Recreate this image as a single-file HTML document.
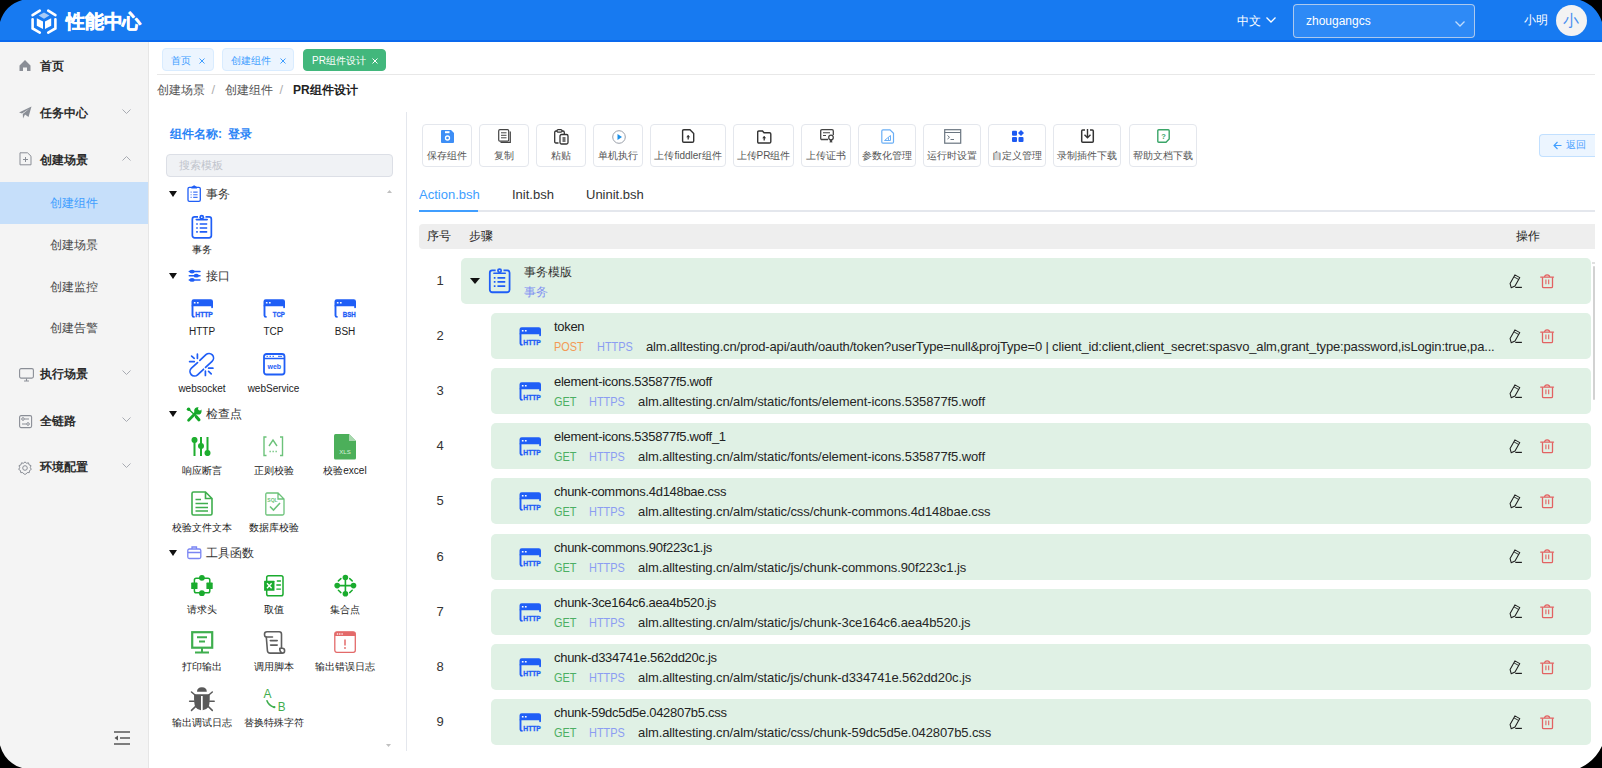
<!DOCTYPE html>
<html><head><meta charset="utf-8"><title>PR组件设计</title>
<style>
*{box-sizing:border-box;margin:0;padding:0}
html,body{width:1602px;height:768px;overflow:hidden;background:#000}
body{font-family:"Liberation Sans",sans-serif;color:#303133}
#app{position:absolute;left:0;top:0;width:1602px;height:768px;background:#fff;overflow:hidden}
.a{position:absolute;white-space:nowrap}
svg{position:absolute;overflow:visible}
#hdr{position:absolute;left:0;top:0;width:1602px;height:42px;background:#177af1;border-bottom:2px solid #0a69ee}
#side{position:absolute;left:0;top:42px;width:149px;height:726px;background:#f4f4f4;border-right:1px solid #e6e6e6}
.mi{font-size:12px;font-weight:bold;color:#2b2b2b;line-height:14px}
.si{font-size:12px;color:#4a4a4a;line-height:14px}
.tag{position:absolute;height:23px;border:1px solid #d9ecff;background:#ecf5ff;border-radius:4px;color:#409eff;font-size:10px;line-height:23px;padding-left:8px}
.tag .x{position:absolute;font-size:11px}
.bc{font-size:12px;color:#555;line-height:14px}
.pl{font-size:10px;color:#222;line-height:13px;text-align:center;width:80px}
.ph{font-size:12px;color:#333;line-height:14px}
.tri{position:absolute;width:0;height:0;border-left:4.5px solid transparent;border-right:4.5px solid transparent;border-top:6px solid #111}
.btn{position:absolute;top:124px;height:43px;border:1px solid #e4e7ed;border-radius:4px;background:#fff}
.btn .t{position:absolute;left:0;right:0;top:25px;text-align:center;font-size:10px;color:#555;line-height:12px}
.row{position:absolute;height:46px;background:#e0f1e5;border-radius:5px;left:491px;width:1100px}
.num{position:absolute;left:420px;width:40px;text-align:center;font-size:13px;color:#333;line-height:16px}
.t1{position:absolute;left:554px;font-size:13px;color:#222;line-height:16px;letter-spacing:-0.3px}
.t2{position:absolute;font-size:13px;line-height:16px}
.sx{transform:scaleX(.84);transform-origin:0 0}
.get{color:#4caf63}.post{color:#f39a55}.https{color:#8c9df2}
.url{color:#262626}
</style></head>
<body><div id="app">
<div id="hdr">
<svg style="left:28px;top:6px" width="32" height="30" viewBox="0 0 32 30"><g fill="none" stroke="#fff" stroke-width="2.6" stroke-linecap="round"><path d="M4.6 9.2 L11.8 4.6"/><path d="M20.2 4.6 L27.4 9.2"/><path d="M4.6 13.2 V22.4 L11.8 26.6"/><path d="M27.4 13.2 V22.4 L20.2 26.6"/></g><path d="M10.6 9.6 L16 6.4 L21.4 9.6 L16 12.8Z" fill="#a6cbf7"/><path d="M8.8 12.2 L15 15.4 V23 L8.8 19.8Z" fill="#fff"/><path d="M23.2 12.2 L17 15.4 V23 L23.2 19.8Z" fill="#fff"/></svg>
<div class="a " style="left:66px;top:10px;font-size:19px;font-weight:bold;color:#fff;line-height:24px;letter-spacing:-0.2px;-webkit-text-stroke:0.5px #fff">性能中心</div>
<div class="a " style="left:1237px;top:14px;font-size:12px;color:#fff;line-height:14px">中文</div>
<svg style="left:1266px;top:17px" width="10" height="6" viewBox="0 0 10 6"><path d="M0.5 0.5 L5.0 5 L9.5 0.5" fill="none" stroke="#fff" stroke-width="1.3"/></svg>
<div class="a" style="left:1293px;top:4px;width:182px;height:34px;border:1px solid rgba(215,222,235,.75);border-radius:4px;background:#2e8af6"></div>
<div class="a " style="left:1306px;top:13px;font-size:12px;color:#fff;line-height:16px">zhougangcs</div>
<svg style="left:1455px;top:21px" width="10" height="6" viewBox="0 0 10 6"><path d="M0.5 0.5 L5.0 5 L9.5 0.5" fill="none" stroke="rgba(255,255,255,.7)" stroke-width="1.3"/></svg>
<div class="a " style="left:1524px;top:13px;font-size:12px;color:#fff;line-height:14px">小明</div>
<div class="a" style="left:1556px;top:5px;width:31px;height:31px;border-radius:50%;background:#f3f3f3"></div>
<div class="a " style="left:1563px;top:12px;font-size:16px;color:#4a90f0;line-height:18px">小</div>
</div>
<div id="side"></div>
<svg style="left:19px;top:59px" width="13" height="13" viewBox="0 0 13 13"><path d="M0.5 6.5 L6 1 L11.5 6.5 V12 H8 V8.5 H4 V12 H0.5Z" fill="#8a8e96"/></svg>
<div class="a mi" style="left:40px;top:59px;">首页</div>
<svg style="left:19px;top:106px" width="13" height="13" viewBox="0 0 13 13"><path d="M0 6.5 L12.5 0.5 L9.5 11 L6 8.5 L4 12.5 L3.8 8 L10.5 2.5 L3 7.5Z" fill="#8a8e96"/></svg>
<div class="a mi" style="left:40px;top:106px;">任务中心</div>
<svg style="left:122px;top:109px" width="9" height="5.5" viewBox="0 0 9 5.5"><path d="M0.5 0.5 L4.5 4.5 L8.5 0.5" fill="none" stroke="#a8abb2" stroke-width="1"/></svg>
<svg style="left:19px;top:152px" width="13" height="14" viewBox="0 0 13 14"><path d="M1 0.8 H8.5 L12 4.2 V12.8 H1Z" fill="none" stroke="#8a8e96" stroke-width="1"/><path d="M4 7.5 H9 M6.5 5 V10" stroke="#8a8e96" stroke-width="1"/></svg>
<div class="a mi" style="left:40px;top:153px;">创建场景</div>
<svg style="left:122px;top:156px" width="9" height="5.5" viewBox="0 0 9 5.5"><path d="M0.5 4.5 L4.5 0.5 L8.5 4.5" fill="none" stroke="#a8abb2" stroke-width="1"/></svg>
<svg style="left:19px;top:368px" width="15" height="14" viewBox="0 0 15 14"><rect x="0.6" y="0.6" width="13.8" height="9.5" rx="1.5" fill="none" stroke="#8a8e96" stroke-width="1.1"/><path d="M5 13 H10 M7.5 10.5 V13" stroke="#8a8e96" stroke-width="1.1"/></svg>
<div class="a mi" style="left:40px;top:367px;">执行场景</div>
<svg style="left:122px;top:370px" width="9" height="5.5" viewBox="0 0 9 5.5"><path d="M0.5 0.5 L4.5 4.5 L8.5 0.5" fill="none" stroke="#a8abb2" stroke-width="1"/></svg>
<svg style="left:19px;top:415px" width="13" height="13" viewBox="0 0 13 13"><rect x="0.6" y="0.6" width="12" height="12" rx="1.5" fill="none" stroke="#8a8e96" stroke-width="1.1"/><circle cx="4" cy="4" r="1.3" fill="none" stroke="#8a8e96"/><circle cx="9" cy="9" r="1.3" fill="none" stroke="#8a8e96"/><path d="M5.5 4 H10 M3 9 H7.5" stroke="#8a8e96"/></svg>
<div class="a mi" style="left:40px;top:414px;">全链路</div>
<svg style="left:122px;top:417px" width="9" height="5.5" viewBox="0 0 9 5.5"><path d="M0.5 0.5 L4.5 4.5 L8.5 0.5" fill="none" stroke="#a8abb2" stroke-width="1"/></svg>
<svg style="left:18px;top:460.5px" width="14" height="14" viewBox="0 0 14 14"><path d="M7 0.8 L8.4 2.3 L10.5 1.8 L11 3.8 L13 4.6 L12.3 6.6 L13.3 8.4 L11.5 9.6 L11.3 11.6 L9.2 11.6 L7.8 13.2 L6.2 13.2 L4.8 11.6 L2.7 11.6 L2.5 9.6 L0.7 8.4 L1.7 6.6 L1 4.6 L3 3.8 L3.5 1.8 L5.6 2.3Z" fill="none" stroke="#8a8e96" stroke-width="1"/><circle cx="7" cy="7" r="2.3" fill="none" stroke="#8a8e96" stroke-width="1"/></svg>
<div class="a mi" style="left:40px;top:460px;">环境配置</div>
<svg style="left:122px;top:463px" width="9" height="5.5" viewBox="0 0 9 5.5"><path d="M0.5 0.5 L4.5 4.5 L8.5 0.5" fill="none" stroke="#a8abb2" stroke-width="1"/></svg>
<div class="a" style="left:0;top:182px;width:148px;height:42px;background:#c6dffa"></div>
<div class="a si" style="left:50px;top:196px;color:#409eff">创建组件</div>
<div class="a si" style="left:50px;top:238px;">创建场景</div>
<div class="a si" style="left:50px;top:280px;">创建监控</div>
<div class="a si" style="left:50px;top:321px;">创建告警</div>
<svg style="left:114px;top:731px" width="16" height="14" viewBox="0 0 16 14"><path d="M0 1 H16 M6 7 H16 M0 13 H16" stroke="#555" stroke-width="1.6"/><path d="M4 4.5 L0.5 7 L4 9.5Z" fill="#555"/></svg>
<div class="tag" style="left:162px;top:48px;width:52px">首页<svg style="left:36px;top:9px" width="6" height="6" viewBox="0 0 6 6"><path d="M0.5 0.5 L5.5 5.5 M5.5 0.5 L0.5 5.5" stroke="#409eff" stroke-width="1"/></svg></div>
<div class="tag" style="left:222px;top:48px;width:72px">创建组件<svg style="left:57px;top:9px" width="6" height="6" viewBox="0 0 6 6"><path d="M0.5 0.5 L5.5 5.5 M5.5 0.5 L0.5 5.5" stroke="#409eff" stroke-width="1"/></svg></div>
<div class="tag" style="left:303px;top:49px;width:83px;height:22px;background:#42b77c;border-color:#42b77c;color:#fff;line-height:22px">PR组件设计<svg style="left:68px;top:7.5px" width="6" height="6" viewBox="0 0 6 6"><path d="M0.5 0.5 L5.5 5.5 M5.5 0.5 L0.5 5.5" stroke="#fff" stroke-width="1"/></svg></div>
<div class="a" style="left:157px;top:74px;width:1438px;height:1px;background:#e8e8e8"></div>
<div class="a bc" style="left:157px;top:83px;">创建场景</div>
<div class="a bc" style="left:211.5px;top:82px;color:#b0b0b0;font-size:13px;line-height:16px">/</div>
<div class="a bc" style="left:225px;top:83px;">创建组件</div>
<div class="a bc" style="left:279.5px;top:82px;color:#b0b0b0;font-size:13px;line-height:16px">/</div>
<div class="a bc" style="left:293px;top:83px;font-weight:bold;color:#222">PR组件设计</div>
<div class="a" style="left:406px;top:112px;width:1px;height:639px;background:#e4e7ed"></div>
<div class="a " style="left:170px;top:126.5px;font-size:12px;color:#2b84f6;line-height:14px;font-weight:bold;word-spacing:0">组件名称:<span style="margin-left:6px">登录</span></div>
<div class="a" style="left:166px;top:154px;width:227px;height:23px;background:#f0f2f5;border:1px solid #dcdfe6;border-radius:4px"></div>
<div class="a " style="left:179px;top:159px;font-size:11px;color:#c0c4cc;line-height:13px">搜索模板</div>
<svg style="left:386.5px;top:190px" width="5" height="3" viewBox="0 0 5 3"><path d="M0 3 L2.5 0 L5 3Z" fill="#c0c0c0"/></svg>
<svg style="left:385.5px;top:744px" width="5" height="3" viewBox="0 0 5 3"><path d="M0 0 L2.5 3 L5 0Z" fill="#c0c0c0"/></svg>
<div class="tri" style="left:169px;top:191px"></div>
<svg style="left:187px;top:186.2px" width="14" height="16" viewBox="0 0 14 16"><rect x="1" y="1.45" width="12.3" height="13.9" rx="1.4" fill="none" stroke="#1f5ef6" stroke-width="1.3"/><path d="M4.3 2.4 V1.1 L7.15 -0.8 L10 1.1 V2.4Z" fill="#1f5ef6"/><path d="M3.6 6.1 H4.6 M6.2 6.1 H10.6 M3.6 8.8 H4.6 M6.2 8.8 H10.6 M3.6 11.4 H4.6 M6.2 11.4 H10.6" stroke="#1f5ef6" stroke-width="1.1" opacity=".85"/></svg>
<div class="a ph" style="left:206px;top:187px;">事务</div>
<div class="tri" style="left:169px;top:273px"></div>
<svg style="left:188px;top:270px" width="13" height="12" viewBox="0 0 13 12"><path d="M1.3 1.6 H12 M1.3 5.7 H12 M1.3 9.9 H12" stroke="#1f5ef6" stroke-width="1.5" stroke-linecap="round"/><ellipse cx="4.1" cy="1.6" rx="2.6" ry="1.9" fill="#1f5ef6"/><ellipse cx="8.3" cy="5.7" rx="2.6" ry="1.9" fill="#1f5ef6"/><ellipse cx="4.1" cy="9.9" rx="2.6" ry="1.9" fill="#1f5ef6"/></svg>
<div class="a ph" style="left:206px;top:269px;">接口</div>
<div class="tri" style="left:169px;top:411px"></div>
<svg style="left:183px;top:402px" width="24" height="24" viewBox="0 0 24 24"><g stroke="#15a82a" stroke-linecap="round"><circle cx="5.6" cy="7.2" r="1.8" fill="#15a82a" stroke="none"/><path d="M5.6 7.2 L12.2 13.2" stroke-width="1.4"/><path d="M13.3 14.8 L15.9 17.8" stroke-width="3.2"/><path d="M13.2 10.6 L5.6 18.2" stroke-width="2.8"/></g><circle cx="14.9" cy="8.9" r="3.7" fill="#15a82a"/><circle cx="16.9" cy="6.6" r="1.9" fill="#fff"/><path d="M16.4 5.2 L19.5 2.5 L21 5 L18.3 7.6Z" fill="#fff"/></svg>
<div class="a ph" style="left:206px;top:407px;">检查点</div>
<div class="tri" style="left:169px;top:550px"></div>
<svg style="left:187px;top:546px" width="15" height="13" viewBox="0 0 15 13"><rect x="0.8" y="3" width="13" height="9.5" rx="1.5" fill="none" stroke="#7a85f3" stroke-width="1.3"/><path d="M5 3 V1 H9.5 V3 M0.8 6.5 H13.8" fill="none" stroke="#7a85f3" stroke-width="1.3"/></svg>
<div class="a ph" style="left:206px;top:546px;">工具函数</div>
<svg style="left:191px;top:214px" width="22" height="26" viewBox="0 0 22 26"><rect x="1.35" y="2.85" width="19" height="21.05" rx="2.3" fill="none" stroke="#1f5ef6" stroke-width="1.7"/><rect x="7" y="1" width="7.5" height="3.5" fill="#fff"/><circle cx="10.75" cy="3.2" r="2.4" fill="#1f5ef6"/><circle cx="10.75" cy="3.2" r=".8" fill="#fff"/><path d="M5.3 5.6 H16.2" stroke="#1f5ef6" stroke-width="1.6" stroke-linecap="round"/><path d="M5.2 10 H6.8 M8.7 10 H16.2 M5.2 14 H6.8 M8.7 14 H16.2 M5.2 17.9 H6.8 M8.7 17.9 H16.2" stroke="#1f5ef6" stroke-width="1.7"/></svg>
<div class="a pl" style="left:162px;top:243.0px;">事务</div>
<svg style="left:191px;top:299px" width="23" height="19" viewBox="0 0 23 19"><path d="M0.5 2.5 Q0.5 0.3 2.7 0.3 H19.8 Q22 0.3 22 2.5 V8.2 Q22 9.2 21 9.2 Q20.2 9.2 20.2 8.2 V7.2 H0.5Z" fill="#1f5ef6"/><path d="M1.5 6.5 V16.6 Q1.5 17.9 3 17.9 H3.6" fill="none" stroke="#1f5ef6" stroke-width="1.9"/><rect x="2.8" y="3" width="1.8" height="1.6" rx=".5" fill="#fff"/><rect x="5.9" y="3" width="1.8" height="1.6" rx=".5" fill="#fff"/><text x="21.8" y="18.2" font-family="Liberation Sans" font-weight="bold" font-size="7" fill="#1f5ef6" text-anchor="end" textLength="17.5" lengthAdjust="spacingAndGlyphs" stroke="#1f5ef6" stroke-width=".35">HTTP</text></svg>
<div class="a pl" style="left:162px;top:324.5px;">HTTP</div>
<svg style="left:262.5px;top:299px" width="23" height="19" viewBox="0 0 23 19"><path d="M0.5 2.5 Q0.5 0.3 2.7 0.3 H19.8 Q22 0.3 22 2.5 V8.2 Q22 9.2 21 9.2 Q20.2 9.2 20.2 8.2 V7.2 H0.5Z" fill="#1f5ef6"/><path d="M1.5 6.5 V16.6 Q1.5 17.9 3 17.9 H3.6" fill="none" stroke="#1f5ef6" stroke-width="1.9"/><rect x="2.8" y="3" width="1.8" height="1.6" rx=".5" fill="#fff"/><rect x="5.9" y="3" width="1.8" height="1.6" rx=".5" fill="#fff"/><text x="21.8" y="18.2" font-family="Liberation Sans" font-weight="bold" font-size="7.5" fill="#1f5ef6" text-anchor="end" textLength="12" lengthAdjust="spacingAndGlyphs" stroke="#1f5ef6" stroke-width=".35">TCP</text></svg>
<div class="a pl" style="left:233.5px;top:324.5px;">TCP</div>
<svg style="left:334px;top:299px" width="23" height="19" viewBox="0 0 23 19"><path d="M0.5 2.5 Q0.5 0.3 2.7 0.3 H19.8 Q22 0.3 22 2.5 V8.2 Q22 9.2 21 9.2 Q20.2 9.2 20.2 8.2 V7.2 H0.5Z" fill="#1f5ef6"/><path d="M1.5 6.5 V16.6 Q1.5 17.9 3 17.9 H3.6" fill="none" stroke="#1f5ef6" stroke-width="1.9"/><rect x="2.8" y="3" width="1.8" height="1.6" rx=".5" fill="#fff"/><rect x="5.9" y="3" width="1.8" height="1.6" rx=".5" fill="#fff"/><text x="21.8" y="18.2" font-family="Liberation Sans" font-weight="bold" font-size="7.5" fill="#1f5ef6" text-anchor="end" textLength="13" lengthAdjust="spacingAndGlyphs" stroke="#1f5ef6" stroke-width=".35">BSH</text></svg>
<div class="a pl" style="left:305px;top:324.5px;">BSH</div>
<svg style="left:185px;top:348px" width="34" height="34" viewBox="0 0 34 34"><g fill="none" stroke="#1f5ef6" stroke-width="1.7" stroke-linecap="round"><path d="M14.85 12.4 L20.94 6.7 A4.5 4.5 0 0 1 27.06 13.3 L20.54 19.38"/><path d="M18.5 21.27 L12.56 26.8 A4.5 4.5 0 0 1 6.44 20.2 L12.53 14.53"/><path d="M6.6 8.1 L9.2 10.3 M12.4 6.2 V10.3 M4.6 13.6 H9.3 M23.6 20.2 H27.9 M20.4 23.2 V27.4 M23.6 23.3 L26.2 25.8"/></g></svg>
<div class="a pl" style="left:162px;top:381.5px;">websocket</div>
<svg style="left:262.5px;top:353px" width="23" height="23" viewBox="0 0 23 23"><rect x="1" y="1" width="20.5" height="20.5" rx="2.5" fill="none" stroke="#1f5ef6" stroke-width="1.8"/><path d="M1 5.5 H21.5" stroke="#1f5ef6" stroke-width="1.5"/><path d="M3.5 3.3 H5 M6.5 3.3 H8 M9.5 3.3 H11 M15 3.3 H19" stroke="#1f5ef6" stroke-width="1"/><text x="11.3" y="16" font-family="Liberation Sans" font-weight="bold" font-size="7" fill="#1f5ef6" text-anchor="middle">web</text></svg>
<div class="a pl" style="left:233.5px;top:381.5px;">webService</div>
<svg style="left:191px;top:436px" width="20" height="21" viewBox="0 0 20 21"><path d="M3.5 1 V20 M10 1 V20 M16.5 1 V20" stroke="#1fae2f" stroke-width="2"/><circle cx="3.5" cy="4" r="3" fill="#1fae2f"/><circle cx="10" cy="10" r="3" fill="#1fae2f"/><circle cx="16.5" cy="17" r="3" fill="#1fae2f"/></svg>
<div class="a pl" style="left:162px;top:463.5px;">响应断言</div>
<svg style="left:263.0px;top:436px" width="21" height="21" viewBox="0 0 21 21"><path d="M3.5 1 H1 V19.5 H3.5 M17 1 H19.5 V19.5 H17" fill="none" stroke="#6cc27a" stroke-width="1.4"/><path d="M6 10 L10 4 L14 10" fill="none" stroke="#6cc27a" stroke-width="1.4"/><path d="M6.5 15.5 H7.8 M9.5 15.5 H10.8 M12.5 15.5 H13.8" stroke="#6cc27a" stroke-width="1.3"/></svg>
<div class="a pl" style="left:233.5px;top:463.5px;">正则校验</div>
<svg style="left:333.5px;top:434px" width="22" height="26" viewBox="0 0 22 26"><path d="M1.5 0 H15 L22 7 V24 Q22 25.5 20.5 25.5 H1.5 Q0 25.5 0 24 V1.5 Q0 0 1.5 0Z" fill="#4caf5a"/><path d="M15 0 V7 H22Z" fill="#a8d8ae"/><text x="11" y="20" font-family="Liberation Sans" font-size="6" fill="#d9f0dc" text-anchor="middle">XLS</text></svg>
<div class="a pl" style="left:305px;top:463.5px;">校验excel</div>
<svg style="left:191px;top:491px" width="22" height="25" viewBox="0 0 22 25"><path d="M2.5 1 H14.5 L21 7.5 V22.5 Q21 24 19.5 24 H2.5 Q1 24 1 22.5 V2.5 Q1 1 2.5 1Z M14.5 1 V7.5 H21" fill="none" stroke="#3fae4e" stroke-width="1.6"/><path d="M4.5 8.5 H10 M4.5 12.5 H17 M4.5 16.5 H17 M4.5 20 H17" stroke="#3fae4e" stroke-width="1.6"/></svg>
<div class="a pl" style="left:162px;top:521.0px;">校验文件文本</div>
<svg style="left:264.5px;top:492px" width="20" height="24" viewBox="0 0 20 24"><path d="M2 1 H13 L19 7 V21.5 Q19 23 17.5 23 H2 Q0.8 23 0.8 21.5 V2.5 Q0.8 1 2 1Z M13 1 V7 H19" fill="none" stroke="#6cc27a" stroke-width="1.3"/><text x="7.5" y="10" font-family="Liberation Sans" font-weight="bold" font-size="5" fill="#6cc27a" text-anchor="middle">SQL</text><path d="M5 14.5 L8.5 18 L15 11" fill="none" stroke="#6cc27a" stroke-width="1.6"/></svg>
<div class="a pl" style="left:233.5px;top:521.0px;">数据库校验</div>
<svg style="left:186px;top:570px" width="32" height="32" viewBox="0 0 32 32"><rect x="8.4" y="8.2" width="15.4" height="14.6" rx="1.8" fill="none" stroke="#1aab2e" stroke-width="1.5"/><circle cx="15.9" cy="7.8" r="2.9" fill="#1aab2e"/><circle cx="15.9" cy="23.2" r="2.9" fill="#1aab2e"/><rect x="5.2" y="12.6" width="6.3" height="6.4" rx=".6" fill="#1aab2e"/><rect x="20.4" y="12.6" width="6.3" height="6.4" rx=".6" fill="#1aab2e"/></svg>
<div class="a pl" style="left:162px;top:602.5px;">请求头</div>
<svg style="left:262.5px;top:575px" width="21" height="23" viewBox="0 0 21 23"><rect x="3.7" y="0.7" width="16.3" height="20" rx="1.8" fill="none" stroke="#1aab2e" stroke-width="1.5"/><rect x="1.1" y="5.7" width="10.4" height="10.1" rx=".6" fill="#1aab2e"/><path d="M4 8.3 L8.6 13.2 M8.6 8.3 L4 13.2" stroke="#fff" stroke-width="1.3"/><path d="M14.3 6 H17.5 M13.8 10 H17.5 M13.8 14.1 H17.5" stroke="#1aab2e" stroke-width="1.3" stroke-linecap="round"/></svg>
<div class="a pl" style="left:233.5px;top:602.5px;">取值</div>
<svg style="left:330px;top:570px" width="32" height="32" viewBox="0 0 32 32"><path d="M15.4 7.5 V23.7 M7.2 15.6 H23.5" stroke="#1aab2e" stroke-width="1.6"/><circle cx="15.4" cy="7.5" r="2.8" fill="#1aab2e"/><circle cx="15.4" cy="23.7" r="2.8" fill="#1aab2e"/><circle cx="7.2" cy="15.6" r="2.8" fill="#1aab2e"/><circle cx="23.5" cy="15.6" r="2.8" fill="#1aab2e"/><path d="M8.4 10.9 L10.9 8.6 M19.7 8.6 L22.2 10.9 M8.4 20.3 L10.9 22.6 M19.7 22.6 L22.2 20.3" stroke="#1aab2e" stroke-width="1.5" stroke-linecap="round"/></svg>
<div class="a pl" style="left:305px;top:602.5px;">集合点</div>
<svg style="left:191px;top:631px" width="23" height="23" viewBox="0 0 23 23"><rect x="1.2" y="1.2" width="20" height="15.5" fill="none" stroke="#3fae4e" stroke-width="2.2"/><path d="M6 6.3 H16 M8 10.5 H14 M11 17 V20.5 M4 21.5 H18" stroke="#3fae4e" stroke-width="2"/></svg>
<div class="a pl" style="left:162px;top:659.5px;">打印输出</div>
<svg style="left:263.0px;top:631px" width="23" height="24" viewBox="0 0 23 24"><g fill="none" stroke="#5e5e5e" stroke-width="1.6" stroke-linecap="round" stroke-linejoin="round"><path d="M3.3 6 Q1.5 6 1.5 3.3 Q1.5 0.8 4 0.8 H16.2 Q18.5 0.8 18.5 3.3 V17.2"/><path d="M3.3 6 H9.5 M3.3 6 L4.4 19.5 Q4.6 22.1 7.2 22.1 H19.3 Q21.6 22.1 21.6 19.7 Q21.6 17.3 19.3 17.3 H16.8 Q16.4 20.5 19.3 22.1"/><path d="M7.3 9.6 H14.2 M7.6 14.1 H14.2"/></g></svg>
<div class="a pl" style="left:233.5px;top:659.5px;">调用脚本</div>
<svg style="left:334px;top:631px" width="22" height="22" viewBox="0 0 22 22"><rect x="0.8" y="0.8" width="20.5" height="20.5" rx="2" fill="none" stroke="#e36a6a" stroke-width="1.3"/><path d="M0.8 3 Q0.8 0.8 3 0.8 H19 Q21.3 0.8 21.3 3 V5 H0.8Z" fill="#e36a6a"/><circle cx="3.5" cy="3" r=".8" fill="#fff"/><circle cx="5.8" cy="3" r=".8" fill="#fff"/><circle cx="8.1" cy="3" r=".8" fill="#fff"/><path d="M11 8.5 V14.5" stroke="#e36a6a" stroke-width="1.5"/><circle cx="11" cy="17" r=".9" fill="#e36a6a"/></svg>
<div class="a pl" style="left:305px;top:659.5px;">输出错误日志</div>
<svg style="left:186px;top:682px" width="32" height="32" viewBox="0 0 32 32"><path d="M11 9.7 Q11 5.2 15.9 5.2 Q20.8 5.2 20.8 9.7Z" fill="#595959"/><path d="M8.1 12.3 H23.7 Q24 22 22.5 25 Q20 28 16.7 28.3 V14 H15 V28.3 Q11.5 28 9.3 25 Q7.8 22 8.1 12.3Z" fill="#595959"/><path d="M5.5 10 L9.3 13.3 M26.3 10 L22.5 13.3 M3.6 19.2 H8.2 M23.6 19.2 H28.2 M5.5 28.4 L9.4 24.6 M26.3 28.4 L22.4 24.6" stroke="#595959" stroke-width="1.5" stroke-linecap="round"/></svg>
<div class="a pl" style="left:162px;top:715.5px;">输出调试日志</div>
<svg style="left:262.5px;top:687px" width="24" height="25" viewBox="0 0 24 25"><text x="4.5" y="10.9" font-family="Liberation Sans" font-size="13" fill="#3fae4e" text-anchor="middle" textLength="8" lengthAdjust="spacingAndGlyphs">A</text><text x="18.6" y="23.6" font-family="Liberation Sans" font-size="13" fill="#3fae4e" text-anchor="middle" textLength="7.8" lengthAdjust="spacingAndGlyphs">B</text><path d="M4 13.8 Q5.5 18.5 11 20.2" fill="none" stroke="#3fae4e" stroke-width="1.6" stroke-linecap="round"/><circle cx="11.3" cy="20.1" r="1.2" fill="#3fae4e"/></svg>
<div class="a pl" style="left:233.5px;top:715.5px;">替换特殊字符</div>
<div class="btn" style="left:422px;width:50px"><svg style="left:18.0px;top:4.5px" width="13" height="13" viewBox="0 0 13 13"><path d="M0 1 Q0 0 1 0 H10 L13 3 V12 Q13 13 12 13 H1 Q0 13 0 12Z" fill="#3d8ef6"/><rect x="4" y="1.2" width="4.5" height="2" fill="#fff"/><circle cx="6.5" cy="8" r="2" fill="none" stroke="#fff" stroke-width="1.3"/></svg><div class="t">保存组件</div></div>
<div class="btn" style="left:479px;width:50px"><svg style="left:18.0px;top:4px" width="14" height="14" viewBox="0 0 14 14"><rect x="0.7" y="0.7" width="10" height="11.5" rx="1.2" fill="#fff" stroke="#444" stroke-width="1.2"/><path d="M12.3 2.5 V13.3 H2.5" fill="none" stroke="#444" stroke-width="1.2"/><path d="M3 3.8 H8.5 M3 6.3 H8.5 M3 8.8 H8.5" stroke="#444" stroke-width="1"/></svg><div class="t">复制</div></div>
<div class="btn" style="left:536px;width:50px"><svg style="left:17.0px;top:3.5px" width="15" height="16" viewBox="0 0 15 16"><path d="M4.5 14 H2 Q0.7 14 0.7 12.5 V3.5 Q0.7 2 2 2 H9 Q10.3 2 10.3 3.5 V5" fill="none" stroke="#333" stroke-width="1.3"/><rect x="3" y="0.6" width="5" height="2.5" rx="1.2" fill="#fff" stroke="#333" stroke-width="1.2"/><rect x="6" y="5.5" width="8" height="9.5" rx="1.5" fill="#fff" stroke="#333" stroke-width="1.3"/><rect x="8.5" y="8" width="3" height="5" fill="#333" opacity=".7"/></svg><div class="t">粘贴</div></div>
<div class="btn" style="left:593px;width:50px"><svg style="left:18.0px;top:4.5px" width="14" height="14" viewBox="0 0 14 14"><circle cx="7" cy="7" r="6.3" fill="none" stroke="#9aa0aa" stroke-width="1"/><path d="M5.5 4 L10 7 L5.5 10Z" fill="#1a90e8"/></svg><div class="t">单机执行</div></div>
<div class="btn" style="left:650px;width:76px"><svg style="left:31.0px;top:4px" width="13" height="14" viewBox="0 0 13 14"><path d="M1.8 0.8 H8 L11.7 4.5 V12 Q11.7 13.3 10.4 13.3 H1.8 Q0.6 13.3 0.6 12 V2 Q0.6 0.8 1.8 0.8Z" fill="none" stroke="#333" stroke-width="1.4"/><path d="M6.2 6.5 V10.5" stroke="#333" stroke-width="1.3"/><path d="M4.2 8.2 L6.2 6 L8.2 8.2Z" fill="#333"/></svg><div class="t">上传fiddler组件</div></div>
<div class="btn" style="left:733px;width:61px"><svg style="left:23.0px;top:4.5px" width="15" height="14" viewBox="0 0 15 14"><path d="M1.8 1 H5.5 L7 2.8 H12.5 Q13.8 2.8 13.8 4 V11.8 Q13.8 13 12.5 13 H1.8 Q0.7 13 0.7 11.8 V2.2 Q0.7 1 1.8 1Z" fill="none" stroke="#333" stroke-width="1.4"/><path d="M7.2 6.5 V10.5" stroke="#333" stroke-width="1.3"/><path d="M5.2 8.3 L7.2 6 L9.2 8.3Z" fill="#333"/></svg><div class="t">上传PR组件</div></div>
<div class="btn" style="left:801px;width:50px"><svg style="left:18.0px;top:4px" width="14" height="14" viewBox="0 0 14 14"><path d="M8 10.5 H2 Q0.7 10.5 0.7 9.2 V2 Q0.7 0.7 2 0.7 H12 Q13.3 0.7 13.3 2 V6" fill="none" stroke="#444" stroke-width="1.3"/><path d="M3 3.8 H10 M3 6.5 H6" stroke="#444" stroke-width="1.1"/><circle cx="11" cy="8.5" r="2.3" fill="none" stroke="#444" stroke-width="1.3"/><path d="M9.8 10.5 V14 L11 13 L12.2 14 V10.5" fill="#444"/></svg><div class="t">上传证书</div></div>
<div class="btn" style="left:858px;width:58px"><svg style="left:22.0px;top:3.5px" width="14" height="15" viewBox="0 0 14 15"><path d="M2 0.8 H9 L12.5 4.3 V13 Q12.5 14.2 11.3 14.2 H2 Q0.8 14.2 0.8 13 V2 Q0.8 0.8 2 0.8Z" fill="none" stroke="#6aaef5" stroke-width="1.2"/><path d="M3.5 11.5 L9.5 6.5 V11.5Z" fill="none" stroke="#6aaef5" stroke-width="1"/><path d="M7.5 8.3 V11.5" stroke="#6aaef5" stroke-width="0.9"/></svg><div class="t">参数化管理</div></div>
<div class="btn" style="left:923px;width:58px"><svg style="left:20.0px;top:3.5px" width="18" height="15" viewBox="0 0 18 15"><rect x="0.7" y="0.7" width="16" height="13.5" fill="none" stroke="#6a7580" stroke-width="1.2"/><path d="M0.7 3.5 H16.7" stroke="#6a7580" stroke-width="1"/><path d="M3.5 6.5 L5.5 8.3 L3.5 10" fill="none" stroke="#6a7580" stroke-width="1"/><path d="M6.5 10.5 H10" stroke="#6a7580" stroke-width="1"/></svg><div class="t">运行时设置</div></div>
<div class="btn" style="left:988px;width:58px"><svg style="left:23.0px;top:5px" width="12" height="12" viewBox="0 0 12 12"><rect x="0" y="0.8" width="5" height="5" rx="1" fill="#1d5af2"/><rect x="0" y="7" width="5" height="5" rx="1" fill="#1d5af2"/><rect x="6.5" y="7" width="5" height="5" rx="1" fill="#1d5af2"/><path d="M9 0 L12 3 L9 6 L6 3Z" fill="#1d5af2"/></svg><div class="t">自定义管理</div></div>
<div class="btn" style="left:1053px;width:68px"><svg style="left:27.0px;top:4px" width="13" height="14" viewBox="0 0 13 14"><path d="M4 1 H1.7 Q0.7 1 0.7 2 V12.3 Q0.7 13.3 1.7 13.3 H11.3 Q12.3 13.3 12.3 12.3 V2 Q12.3 1 11.3 1 H9" fill="none" stroke="#333" stroke-width="1.5"/><path d="M6.5 0 V8.5 M3.5 5.8 L6.5 8.8 L9.5 5.8" fill="none" stroke="#333" stroke-width="1.4"/></svg><div class="t">录制插件下载</div></div>
<div class="btn" style="left:1129px;width:68px"><svg style="left:27.0px;top:4px" width="13" height="14" viewBox="0 0 13 14"><path d="M1.8 0.8 H11.2 Q12.2 0.8 12.2 1.8 V10 L9 13.3 H1.8 Q0.8 13.3 0.8 12.3 V1.8 Q0.8 0.8 1.8 0.8Z" fill="none" stroke="#3aa568" stroke-width="1.4"/><text x="6.5" y="9.5" font-family="Liberation Sans" font-weight="bold" font-size="7.5" fill="#3aa568" text-anchor="middle">?</text></svg><div class="t">帮助文档下载</div></div>
<div class="a" style="left:1539px;top:134px;width:56px;height:23px;background:#ecf5ff;border:1px solid #c2e0ff;border-right:none;border-radius:4px 0 0 4px"></div>
<svg style="left:1553px;top:141px" width="9" height="9" viewBox="0 0 9 9"><path d="M8.5 4.5 H1 M4.5 1 L1 4.5 L4.5 8" fill="none" stroke="#409eff" stroke-width="1.1"/></svg>
<div class="a " style="left:1566px;top:139px;font-size:10px;color:#4fa3ff;line-height:12px">返回</div>
<div class="a" style="left:419px;top:210px;width:1176px;height:2px;background:#e4e7ed"></div>
<div class="a" style="left:419px;top:210px;width:59px;height:2px;background:#409eff"></div>
<div class="a " style="left:419px;top:187px;font-size:13px;color:#409eff;line-height:16px">Action.bsh</div>
<div class="a " style="left:512px;top:187px;font-size:13px;color:#333;line-height:16px">Init.bsh</div>
<div class="a " style="left:586px;top:187px;font-size:13px;color:#333;line-height:16px">Uninit.bsh</div>
<div class="a" style="left:419px;top:224px;width:1176px;height:25px;background:#eeeeee;border-radius:4px 0 0 4px"></div>
<div class="a " style="left:427px;top:229px;font-size:12px;color:#222;line-height:14px">序号</div>
<div class="a " style="left:469px;top:229px;font-size:12px;color:#222;line-height:14px">步骤</div>
<div class="a " style="left:1516px;top:229px;font-size:12px;color:#222;line-height:14px">操作</div>
<div class="row" style="left:461px;width:1130px;top:258px"></div>
<div class="num" style="top:273px">1</div>
<div class="tri" style="left:470px;top:278px;border-left-width:5px;border-right-width:5px;border-top-width:6px"></div>
<svg style="left:489px;top:268px" width="22" height="27" viewBox="0 0 22 27"><g transform="translate(-0.6 -0.6) scale(1.04)"><rect x="1.35" y="2.85" width="19" height="21.05" rx="2.3" fill="none" stroke="#1f5ef6" stroke-width="1.7"/><rect x="7" y="1" width="7.5" height="3.5" fill="#e0f1e5"/><circle cx="10.75" cy="3.2" r="2.4" fill="#1f5ef6"/><circle cx="10.75" cy="3.2" r=".8" fill="#e0f1e5"/><path d="M5.3 5.6 H16.2" stroke="#1f5ef6" stroke-width="1.6" stroke-linecap="round"/><path d="M5.2 10 H6.8 M8.7 10 H16.2 M5.2 14 H6.8 M8.7 14 H16.2 M5.2 17.9 H6.8 M8.7 17.9 H16.2" stroke="#1f5ef6" stroke-width="1.7"/></g></svg>
<div class="a " style="left:524px;top:265px;font-size:12px;color:#333;line-height:14px">事务模版</div>
<div class="a " style="left:524px;top:285px;font-size:12px;color:#8091f2;line-height:14px">事务</div>
<svg style="left:1509px;top:272.8px" width="14" height="16" viewBox="0 0 14 16"><path d="M5.9 1.9 L10.8 4.6 L6 13.1 L2.2 14.7 L1.1 10.6Z" fill="none" stroke="#1e1e1e" stroke-width="1.05" stroke-linejoin="round"/><path d="M5 3.9 L9.7 6.5" stroke="#1e1e1e" stroke-width=".9"/><path d="M6.3 14.4 H12.9" stroke="#1e1e1e" stroke-width="1.2"/></svg>
<svg style="left:1540px;top:272.8px" width="14" height="16" viewBox="0 0 14 16"><path d="M0.7 4.1 H13.5" stroke="#e26262" stroke-width="1.3" stroke-linecap="round"/><path d="M4.6 4 Q4.6 1.8 7.1 1.8 Q9.6 1.8 9.6 4" fill="none" stroke="#e26262" stroke-width="1.2"/><path d="M2.5 4.2 V13.4 Q2.5 14.6 3.7 14.6 H11.3 Q12.5 14.6 12.5 13.4 V4.2" fill="none" stroke="#e26262" stroke-width="1.3"/><path d="M5.9 6.6 V11.3 M8.7 6.6 V11.3" stroke="#e26262" stroke-width="1.1"/></svg>
<div class="row" style="top:313.0px"></div>
<div class="num" style="top:328.0px">2</div>
<svg style="left:519px;top:327.0px" width="23" height="19" viewBox="0 0 23 19"><path d="M0.5 2.5 Q0.5 0.3 2.7 0.3 H19.8 Q22 0.3 22 2.5 V8.2 Q22 9.2 21 9.2 Q20.2 9.2 20.2 8.2 V7.2 H0.5Z" fill="#1f5ef6"/><path d="M1.5 6.5 V16.6 Q1.5 17.9 3 17.9 H3.6" fill="none" stroke="#1f5ef6" stroke-width="1.9"/><rect x="2.8" y="3" width="1.8" height="1.6" rx=".5" fill="#fff"/><rect x="5.9" y="3" width="1.8" height="1.6" rx=".5" fill="#fff"/><text x="21.8" y="18.2" font-family="Liberation Sans" font-weight="bold" font-size="7" fill="#1f5ef6" text-anchor="end" textLength="17.5" lengthAdjust="spacingAndGlyphs" stroke="#1f5ef6" stroke-width=".35">HTTP</text></svg>
<div class="t1" style="top:319.0px">token</div>
<div class="t2 post sx" style="left:554px;top:339.0px">POST</div>
<div class="t2 https sx" style="left:597px;top:339.0px">HTTPS</div>
<div class="t2 url" style="left:646px;top:339.0px;letter-spacing:-0.16px">alm.alltesting.cn/prod-api/auth/oauth/token?userType=null&amp;projType=0 | client_id:client,client_secret:spasvo_alm,grant_type:password,isLogin:true,pa...</div>
<svg style="left:1509px;top:327.8px" width="14" height="16" viewBox="0 0 14 16"><path d="M5.9 1.9 L10.8 4.6 L6 13.1 L2.2 14.7 L1.1 10.6Z" fill="none" stroke="#1e1e1e" stroke-width="1.05" stroke-linejoin="round"/><path d="M5 3.9 L9.7 6.5" stroke="#1e1e1e" stroke-width=".9"/><path d="M6.3 14.4 H12.9" stroke="#1e1e1e" stroke-width="1.2"/></svg>
<svg style="left:1540px;top:327.8px" width="14" height="16" viewBox="0 0 14 16"><path d="M0.7 4.1 H13.5" stroke="#e26262" stroke-width="1.3" stroke-linecap="round"/><path d="M4.6 4 Q4.6 1.8 7.1 1.8 Q9.6 1.8 9.6 4" fill="none" stroke="#e26262" stroke-width="1.2"/><path d="M2.5 4.2 V13.4 Q2.5 14.6 3.7 14.6 H11.3 Q12.5 14.6 12.5 13.4 V4.2" fill="none" stroke="#e26262" stroke-width="1.3"/><path d="M5.9 6.6 V11.3 M8.7 6.6 V11.3" stroke="#e26262" stroke-width="1.1"/></svg>
<div class="row" style="top:368.125px"></div>
<div class="num" style="top:383.125px">3</div>
<svg style="left:519px;top:382.125px" width="23" height="19" viewBox="0 0 23 19"><path d="M0.5 2.5 Q0.5 0.3 2.7 0.3 H19.8 Q22 0.3 22 2.5 V8.2 Q22 9.2 21 9.2 Q20.2 9.2 20.2 8.2 V7.2 H0.5Z" fill="#1f5ef6"/><path d="M1.5 6.5 V16.6 Q1.5 17.9 3 17.9 H3.6" fill="none" stroke="#1f5ef6" stroke-width="1.9"/><rect x="2.8" y="3" width="1.8" height="1.6" rx=".5" fill="#fff"/><rect x="5.9" y="3" width="1.8" height="1.6" rx=".5" fill="#fff"/><text x="21.8" y="18.2" font-family="Liberation Sans" font-weight="bold" font-size="7" fill="#1f5ef6" text-anchor="end" textLength="17.5" lengthAdjust="spacingAndGlyphs" stroke="#1f5ef6" stroke-width=".35">HTTP</text></svg>
<div class="t1" style="top:374.125px">element-icons.535877f5.woff</div>
<div class="t2 get sx" style="left:554px;top:394.125px">GET</div>
<div class="t2 https sx" style="left:589px;top:394.125px">HTTPS</div>
<div class="t2 url" style="left:638px;top:394.125px;letter-spacing:-0.1px">alm.alltesting.cn/alm/static/fonts/element-icons.535877f5.woff</div>
<svg style="left:1509px;top:382.925px" width="14" height="16" viewBox="0 0 14 16"><path d="M5.9 1.9 L10.8 4.6 L6 13.1 L2.2 14.7 L1.1 10.6Z" fill="none" stroke="#1e1e1e" stroke-width="1.05" stroke-linejoin="round"/><path d="M5 3.9 L9.7 6.5" stroke="#1e1e1e" stroke-width=".9"/><path d="M6.3 14.4 H12.9" stroke="#1e1e1e" stroke-width="1.2"/></svg>
<svg style="left:1540px;top:382.925px" width="14" height="16" viewBox="0 0 14 16"><path d="M0.7 4.1 H13.5" stroke="#e26262" stroke-width="1.3" stroke-linecap="round"/><path d="M4.6 4 Q4.6 1.8 7.1 1.8 Q9.6 1.8 9.6 4" fill="none" stroke="#e26262" stroke-width="1.2"/><path d="M2.5 4.2 V13.4 Q2.5 14.6 3.7 14.6 H11.3 Q12.5 14.6 12.5 13.4 V4.2" fill="none" stroke="#e26262" stroke-width="1.3"/><path d="M5.9 6.6 V11.3 M8.7 6.6 V11.3" stroke="#e26262" stroke-width="1.1"/></svg>
<div class="row" style="top:423.25px"></div>
<div class="num" style="top:438.25px">4</div>
<svg style="left:519px;top:437.25px" width="23" height="19" viewBox="0 0 23 19"><path d="M0.5 2.5 Q0.5 0.3 2.7 0.3 H19.8 Q22 0.3 22 2.5 V8.2 Q22 9.2 21 9.2 Q20.2 9.2 20.2 8.2 V7.2 H0.5Z" fill="#1f5ef6"/><path d="M1.5 6.5 V16.6 Q1.5 17.9 3 17.9 H3.6" fill="none" stroke="#1f5ef6" stroke-width="1.9"/><rect x="2.8" y="3" width="1.8" height="1.6" rx=".5" fill="#fff"/><rect x="5.9" y="3" width="1.8" height="1.6" rx=".5" fill="#fff"/><text x="21.8" y="18.2" font-family="Liberation Sans" font-weight="bold" font-size="7" fill="#1f5ef6" text-anchor="end" textLength="17.5" lengthAdjust="spacingAndGlyphs" stroke="#1f5ef6" stroke-width=".35">HTTP</text></svg>
<div class="t1" style="top:429.25px">element-icons.535877f5.woff_1</div>
<div class="t2 get sx" style="left:554px;top:449.25px">GET</div>
<div class="t2 https sx" style="left:589px;top:449.25px">HTTPS</div>
<div class="t2 url" style="left:638px;top:449.25px;letter-spacing:-0.1px">alm.alltesting.cn/alm/static/fonts/element-icons.535877f5.woff</div>
<svg style="left:1509px;top:438.05px" width="14" height="16" viewBox="0 0 14 16"><path d="M5.9 1.9 L10.8 4.6 L6 13.1 L2.2 14.7 L1.1 10.6Z" fill="none" stroke="#1e1e1e" stroke-width="1.05" stroke-linejoin="round"/><path d="M5 3.9 L9.7 6.5" stroke="#1e1e1e" stroke-width=".9"/><path d="M6.3 14.4 H12.9" stroke="#1e1e1e" stroke-width="1.2"/></svg>
<svg style="left:1540px;top:438.05px" width="14" height="16" viewBox="0 0 14 16"><path d="M0.7 4.1 H13.5" stroke="#e26262" stroke-width="1.3" stroke-linecap="round"/><path d="M4.6 4 Q4.6 1.8 7.1 1.8 Q9.6 1.8 9.6 4" fill="none" stroke="#e26262" stroke-width="1.2"/><path d="M2.5 4.2 V13.4 Q2.5 14.6 3.7 14.6 H11.3 Q12.5 14.6 12.5 13.4 V4.2" fill="none" stroke="#e26262" stroke-width="1.3"/><path d="M5.9 6.6 V11.3 M8.7 6.6 V11.3" stroke="#e26262" stroke-width="1.1"/></svg>
<div class="row" style="top:478.375px"></div>
<div class="num" style="top:493.375px">5</div>
<svg style="left:519px;top:492.375px" width="23" height="19" viewBox="0 0 23 19"><path d="M0.5 2.5 Q0.5 0.3 2.7 0.3 H19.8 Q22 0.3 22 2.5 V8.2 Q22 9.2 21 9.2 Q20.2 9.2 20.2 8.2 V7.2 H0.5Z" fill="#1f5ef6"/><path d="M1.5 6.5 V16.6 Q1.5 17.9 3 17.9 H3.6" fill="none" stroke="#1f5ef6" stroke-width="1.9"/><rect x="2.8" y="3" width="1.8" height="1.6" rx=".5" fill="#fff"/><rect x="5.9" y="3" width="1.8" height="1.6" rx=".5" fill="#fff"/><text x="21.8" y="18.2" font-family="Liberation Sans" font-weight="bold" font-size="7" fill="#1f5ef6" text-anchor="end" textLength="17.5" lengthAdjust="spacingAndGlyphs" stroke="#1f5ef6" stroke-width=".35">HTTP</text></svg>
<div class="t1" style="top:484.375px">chunk-commons.4d148bae.css</div>
<div class="t2 get sx" style="left:554px;top:504.375px">GET</div>
<div class="t2 https sx" style="left:589px;top:504.375px">HTTPS</div>
<div class="t2 url" style="left:638px;top:504.375px;letter-spacing:-0.1px">alm.alltesting.cn/alm/static/css/chunk-commons.4d148bae.css</div>
<svg style="left:1509px;top:493.175px" width="14" height="16" viewBox="0 0 14 16"><path d="M5.9 1.9 L10.8 4.6 L6 13.1 L2.2 14.7 L1.1 10.6Z" fill="none" stroke="#1e1e1e" stroke-width="1.05" stroke-linejoin="round"/><path d="M5 3.9 L9.7 6.5" stroke="#1e1e1e" stroke-width=".9"/><path d="M6.3 14.4 H12.9" stroke="#1e1e1e" stroke-width="1.2"/></svg>
<svg style="left:1540px;top:493.175px" width="14" height="16" viewBox="0 0 14 16"><path d="M0.7 4.1 H13.5" stroke="#e26262" stroke-width="1.3" stroke-linecap="round"/><path d="M4.6 4 Q4.6 1.8 7.1 1.8 Q9.6 1.8 9.6 4" fill="none" stroke="#e26262" stroke-width="1.2"/><path d="M2.5 4.2 V13.4 Q2.5 14.6 3.7 14.6 H11.3 Q12.5 14.6 12.5 13.4 V4.2" fill="none" stroke="#e26262" stroke-width="1.3"/><path d="M5.9 6.6 V11.3 M8.7 6.6 V11.3" stroke="#e26262" stroke-width="1.1"/></svg>
<div class="row" style="top:533.5px"></div>
<div class="num" style="top:548.5px">6</div>
<svg style="left:519px;top:547.5px" width="23" height="19" viewBox="0 0 23 19"><path d="M0.5 2.5 Q0.5 0.3 2.7 0.3 H19.8 Q22 0.3 22 2.5 V8.2 Q22 9.2 21 9.2 Q20.2 9.2 20.2 8.2 V7.2 H0.5Z" fill="#1f5ef6"/><path d="M1.5 6.5 V16.6 Q1.5 17.9 3 17.9 H3.6" fill="none" stroke="#1f5ef6" stroke-width="1.9"/><rect x="2.8" y="3" width="1.8" height="1.6" rx=".5" fill="#fff"/><rect x="5.9" y="3" width="1.8" height="1.6" rx=".5" fill="#fff"/><text x="21.8" y="18.2" font-family="Liberation Sans" font-weight="bold" font-size="7" fill="#1f5ef6" text-anchor="end" textLength="17.5" lengthAdjust="spacingAndGlyphs" stroke="#1f5ef6" stroke-width=".35">HTTP</text></svg>
<div class="t1" style="top:539.5px">chunk-commons.90f223c1.js</div>
<div class="t2 get sx" style="left:554px;top:559.5px">GET</div>
<div class="t2 https sx" style="left:589px;top:559.5px">HTTPS</div>
<div class="t2 url" style="left:638px;top:559.5px;letter-spacing:-0.1px">alm.alltesting.cn/alm/static/js/chunk-commons.90f223c1.js</div>
<svg style="left:1509px;top:548.3px" width="14" height="16" viewBox="0 0 14 16"><path d="M5.9 1.9 L10.8 4.6 L6 13.1 L2.2 14.7 L1.1 10.6Z" fill="none" stroke="#1e1e1e" stroke-width="1.05" stroke-linejoin="round"/><path d="M5 3.9 L9.7 6.5" stroke="#1e1e1e" stroke-width=".9"/><path d="M6.3 14.4 H12.9" stroke="#1e1e1e" stroke-width="1.2"/></svg>
<svg style="left:1540px;top:548.3px" width="14" height="16" viewBox="0 0 14 16"><path d="M0.7 4.1 H13.5" stroke="#e26262" stroke-width="1.3" stroke-linecap="round"/><path d="M4.6 4 Q4.6 1.8 7.1 1.8 Q9.6 1.8 9.6 4" fill="none" stroke="#e26262" stroke-width="1.2"/><path d="M2.5 4.2 V13.4 Q2.5 14.6 3.7 14.6 H11.3 Q12.5 14.6 12.5 13.4 V4.2" fill="none" stroke="#e26262" stroke-width="1.3"/><path d="M5.9 6.6 V11.3 M8.7 6.6 V11.3" stroke="#e26262" stroke-width="1.1"/></svg>
<div class="row" style="top:588.625px"></div>
<div class="num" style="top:603.625px">7</div>
<svg style="left:519px;top:602.625px" width="23" height="19" viewBox="0 0 23 19"><path d="M0.5 2.5 Q0.5 0.3 2.7 0.3 H19.8 Q22 0.3 22 2.5 V8.2 Q22 9.2 21 9.2 Q20.2 9.2 20.2 8.2 V7.2 H0.5Z" fill="#1f5ef6"/><path d="M1.5 6.5 V16.6 Q1.5 17.9 3 17.9 H3.6" fill="none" stroke="#1f5ef6" stroke-width="1.9"/><rect x="2.8" y="3" width="1.8" height="1.6" rx=".5" fill="#fff"/><rect x="5.9" y="3" width="1.8" height="1.6" rx=".5" fill="#fff"/><text x="21.8" y="18.2" font-family="Liberation Sans" font-weight="bold" font-size="7" fill="#1f5ef6" text-anchor="end" textLength="17.5" lengthAdjust="spacingAndGlyphs" stroke="#1f5ef6" stroke-width=".35">HTTP</text></svg>
<div class="t1" style="top:594.625px">chunk-3ce164c6.aea4b520.js</div>
<div class="t2 get sx" style="left:554px;top:614.625px">GET</div>
<div class="t2 https sx" style="left:589px;top:614.625px">HTTPS</div>
<div class="t2 url" style="left:638px;top:614.625px;letter-spacing:-0.1px">alm.alltesting.cn/alm/static/js/chunk-3ce164c6.aea4b520.js</div>
<svg style="left:1509px;top:603.425px" width="14" height="16" viewBox="0 0 14 16"><path d="M5.9 1.9 L10.8 4.6 L6 13.1 L2.2 14.7 L1.1 10.6Z" fill="none" stroke="#1e1e1e" stroke-width="1.05" stroke-linejoin="round"/><path d="M5 3.9 L9.7 6.5" stroke="#1e1e1e" stroke-width=".9"/><path d="M6.3 14.4 H12.9" stroke="#1e1e1e" stroke-width="1.2"/></svg>
<svg style="left:1540px;top:603.425px" width="14" height="16" viewBox="0 0 14 16"><path d="M0.7 4.1 H13.5" stroke="#e26262" stroke-width="1.3" stroke-linecap="round"/><path d="M4.6 4 Q4.6 1.8 7.1 1.8 Q9.6 1.8 9.6 4" fill="none" stroke="#e26262" stroke-width="1.2"/><path d="M2.5 4.2 V13.4 Q2.5 14.6 3.7 14.6 H11.3 Q12.5 14.6 12.5 13.4 V4.2" fill="none" stroke="#e26262" stroke-width="1.3"/><path d="M5.9 6.6 V11.3 M8.7 6.6 V11.3" stroke="#e26262" stroke-width="1.1"/></svg>
<div class="row" style="top:643.75px"></div>
<div class="num" style="top:658.75px">8</div>
<svg style="left:519px;top:657.75px" width="23" height="19" viewBox="0 0 23 19"><path d="M0.5 2.5 Q0.5 0.3 2.7 0.3 H19.8 Q22 0.3 22 2.5 V8.2 Q22 9.2 21 9.2 Q20.2 9.2 20.2 8.2 V7.2 H0.5Z" fill="#1f5ef6"/><path d="M1.5 6.5 V16.6 Q1.5 17.9 3 17.9 H3.6" fill="none" stroke="#1f5ef6" stroke-width="1.9"/><rect x="2.8" y="3" width="1.8" height="1.6" rx=".5" fill="#fff"/><rect x="5.9" y="3" width="1.8" height="1.6" rx=".5" fill="#fff"/><text x="21.8" y="18.2" font-family="Liberation Sans" font-weight="bold" font-size="7" fill="#1f5ef6" text-anchor="end" textLength="17.5" lengthAdjust="spacingAndGlyphs" stroke="#1f5ef6" stroke-width=".35">HTTP</text></svg>
<div class="t1" style="top:649.75px">chunk-d334741e.562dd20c.js</div>
<div class="t2 get sx" style="left:554px;top:669.75px">GET</div>
<div class="t2 https sx" style="left:589px;top:669.75px">HTTPS</div>
<div class="t2 url" style="left:638px;top:669.75px;letter-spacing:-0.1px">alm.alltesting.cn/alm/static/js/chunk-d334741e.562dd20c.js</div>
<svg style="left:1509px;top:658.55px" width="14" height="16" viewBox="0 0 14 16"><path d="M5.9 1.9 L10.8 4.6 L6 13.1 L2.2 14.7 L1.1 10.6Z" fill="none" stroke="#1e1e1e" stroke-width="1.05" stroke-linejoin="round"/><path d="M5 3.9 L9.7 6.5" stroke="#1e1e1e" stroke-width=".9"/><path d="M6.3 14.4 H12.9" stroke="#1e1e1e" stroke-width="1.2"/></svg>
<svg style="left:1540px;top:658.55px" width="14" height="16" viewBox="0 0 14 16"><path d="M0.7 4.1 H13.5" stroke="#e26262" stroke-width="1.3" stroke-linecap="round"/><path d="M4.6 4 Q4.6 1.8 7.1 1.8 Q9.6 1.8 9.6 4" fill="none" stroke="#e26262" stroke-width="1.2"/><path d="M2.5 4.2 V13.4 Q2.5 14.6 3.7 14.6 H11.3 Q12.5 14.6 12.5 13.4 V4.2" fill="none" stroke="#e26262" stroke-width="1.3"/><path d="M5.9 6.6 V11.3 M8.7 6.6 V11.3" stroke="#e26262" stroke-width="1.1"/></svg>
<div class="row" style="top:698.875px"></div>
<div class="num" style="top:713.875px">9</div>
<svg style="left:519px;top:712.875px" width="23" height="19" viewBox="0 0 23 19"><path d="M0.5 2.5 Q0.5 0.3 2.7 0.3 H19.8 Q22 0.3 22 2.5 V8.2 Q22 9.2 21 9.2 Q20.2 9.2 20.2 8.2 V7.2 H0.5Z" fill="#1f5ef6"/><path d="M1.5 6.5 V16.6 Q1.5 17.9 3 17.9 H3.6" fill="none" stroke="#1f5ef6" stroke-width="1.9"/><rect x="2.8" y="3" width="1.8" height="1.6" rx=".5" fill="#fff"/><rect x="5.9" y="3" width="1.8" height="1.6" rx=".5" fill="#fff"/><text x="21.8" y="18.2" font-family="Liberation Sans" font-weight="bold" font-size="7" fill="#1f5ef6" text-anchor="end" textLength="17.5" lengthAdjust="spacingAndGlyphs" stroke="#1f5ef6" stroke-width=".35">HTTP</text></svg>
<div class="t1" style="top:704.875px">chunk-59dc5d5e.042807b5.css</div>
<div class="t2 get sx" style="left:554px;top:724.875px">GET</div>
<div class="t2 https sx" style="left:589px;top:724.875px">HTTPS</div>
<div class="t2 url" style="left:638px;top:724.875px;letter-spacing:-0.1px">alm.alltesting.cn/alm/static/css/chunk-59dc5d5e.042807b5.css</div>
<svg style="left:1509px;top:713.675px" width="14" height="16" viewBox="0 0 14 16"><path d="M5.9 1.9 L10.8 4.6 L6 13.1 L2.2 14.7 L1.1 10.6Z" fill="none" stroke="#1e1e1e" stroke-width="1.05" stroke-linejoin="round"/><path d="M5 3.9 L9.7 6.5" stroke="#1e1e1e" stroke-width=".9"/><path d="M6.3 14.4 H12.9" stroke="#1e1e1e" stroke-width="1.2"/></svg>
<svg style="left:1540px;top:713.675px" width="14" height="16" viewBox="0 0 14 16"><path d="M0.7 4.1 H13.5" stroke="#e26262" stroke-width="1.3" stroke-linecap="round"/><path d="M4.6 4 Q4.6 1.8 7.1 1.8 Q9.6 1.8 9.6 4" fill="none" stroke="#e26262" stroke-width="1.2"/><path d="M2.5 4.2 V13.4 Q2.5 14.6 3.7 14.6 H11.3 Q12.5 14.6 12.5 13.4 V4.2" fill="none" stroke="#e26262" stroke-width="1.3"/><path d="M5.9 6.6 V11.3 M8.7 6.6 V11.3" stroke="#e26262" stroke-width="1.1"/></svg>
<div class="a" style="left:1592.5px;top:266px;width:2px;height:134px;background:#d2d2d2;border-radius:1px"></div>
<div class="a" style="left:1592px;top:262px;width:3px;height:2px;background:#e0e0e0"></div>
<svg style="left:0;top:0" width="1602" height="768" viewBox="0 0 1602 768"><path d="M0 0 H22.2 Q5 5 0 22 Z" fill="#000"/><path d="M1602 0 H1580 Q1596.5 5.5 1602 22 Z" fill="#000"/><path d="M1602 768 V746 Q1595 761 1580 768 Z" fill="#000"/><path d="M0 768 V745.3 Q5 763 22.1 768 Z" fill="#000"/></svg>
</div></body></html>
